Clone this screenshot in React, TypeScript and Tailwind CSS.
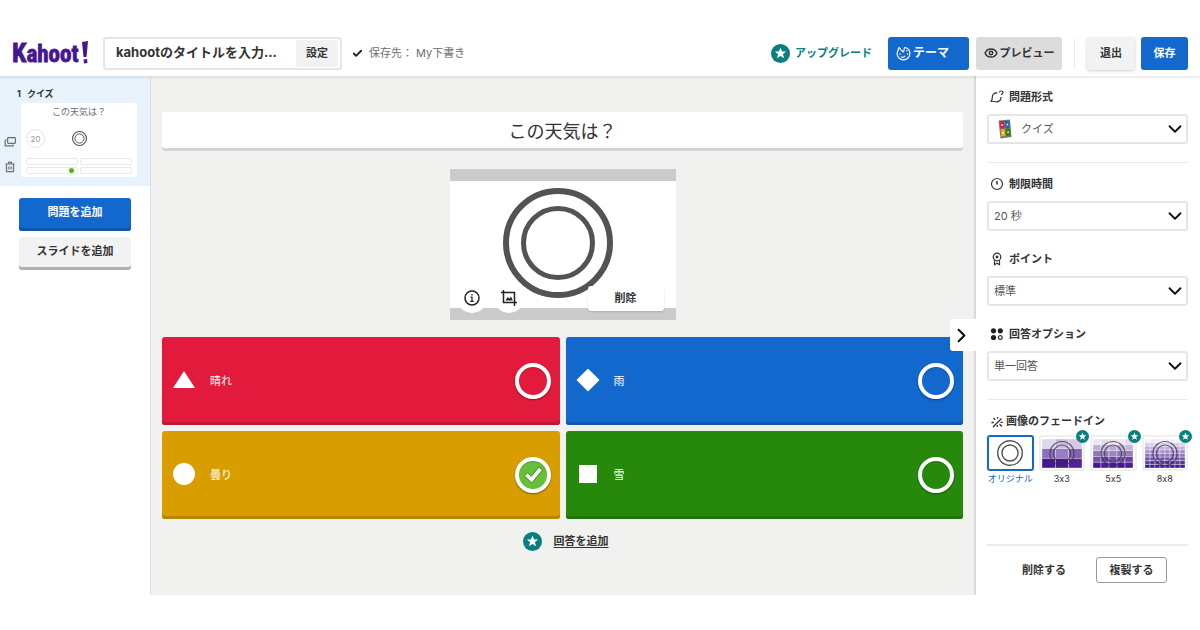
import { useState } from 'react'
import type { ReactNode } from 'react'
import { Check, ChevronDown, ChevronRight, Eye } from 'lucide-react'
import clsx from 'clsx'

type Shape = 'triangle' | 'diamond' | 'circle' | 'square'

const ANSWERS: { text: string; shape: Shape; color: string }[] = [
  { text: '晴れ', shape: 'triangle', color: 'bg-[#e21b3c] shadow-[inset_0_-3px_0_#c01733]' },
  { text: '雨', shape: 'diamond', color: 'bg-[#1368ce] shadow-[inset_0_-3px_0_#1058af]' },
  { text: '曇り', shape: 'circle', color: 'bg-[#d89e00] shadow-[inset_0_-3px_0_#b88600]' },
  { text: '雪', shape: 'square', color: 'bg-[#26890c] shadow-[inset_0_-3px_0_#20750a]' },
]

const FADES = [
  { label: 'オリジナル', cells: 0 },
  { label: '3x3', cells: 3 },
  { label: '5x5', cells: 5 },
  { label: '8x8', cells: 8 },
]

function Logo() {
  return (
    <a href="#" aria-label="Kahoot!" className="block shrink-0 text-[#46178f]">
      <svg
        width="78"
        height="30"
        viewBox="0 0 78 30"
        fill="currentColor"
        stroke="currentColor"
        strokeWidth="0.8"
        className="font-['Liberation_Sans_Narrow','Roboto_Condensed','Roboto',sans-serif] font-bold"
      >
        <text x="0" y="24" fontSize="23">
          <tspan fontSize="26">K</tspan>ahoot
        </text>
        <path d="M70 4l6-1-1.500 16h-3z M71.500 21.500l3.500-.5.5 4-3.500.5z" stroke="none" />
      </svg>
    </a>
  )
}

function StarBadge({ className }: { className?: string }) {
  return (
    <svg viewBox="0 0 20 20" className={className} aria-hidden="true">
      <circle cx="10" cy="10" r="10" fill="#0a7f7f" />
      <path d="M10 4l1.700 4h4.200l-3.400 2.700 1.300 4.300L10 12.500 6.200 15l1.300-4.300L4.100 8h4.200z" fill="#fff" />
    </svg>
  )
}

function Rings({ className, outer = 3, inner = 3 }: { className?: string; outer?: number; inner?: number }) {
  return (
    <svg viewBox="0 0 110 110" fill="none" stroke="#535353" className={className} aria-hidden="true">
      <circle cx="55" cy="55" r={55 - outer / 2} strokeWidth={outer} />
      <circle cx="55" cy="55" r={37 - inner / 2} strokeWidth={inner} />
    </svg>
  )
}

function ShapeIcon({ shape }: { shape: Shape }) {
  return (
    <svg viewBox="0 0 24 24" fill="#fff" className="size-6 shrink-0" aria-hidden="true">
      {shape === 'triangle' && <path d="M12 2l11 17H1z" />}
      {shape === 'diamond' && <path d="M12 -0.500l11.500 11.500L12 22.500.5 11z" />}
      {shape === 'circle' && <circle cx="12" cy="11" r="11" />}
      {shape === 'square' && <path d="M3 2h18v18H3z" />}
    </svg>
  )
}

function Header() {
  return (
    <header className="relative z-10 flex h-[46px] items-center bg-white pr-3 pl-3 shadow-[0_2px_2px_rgba(0,0,0,0.08)]">
      <Logo />
      <div className="ml-[13px] flex h-[33px] w-[239px] items-center rounded-[3px] border-2 border-[#e6e6e6] p-px">
        <input
          aria-label="kahootのタイトル"
          defaultValue="kahootのタイトルを入力..."
          className="min-w-0 flex-1 pl-2.5 text-[13px] font-bold text-[#333] outline-none"
        />
        <button className="mr-px h-[27px] w-[42px] rounded-[3px] bg-[#f2f2f2] font-bold">設定</button>
      </div>
      <div className="ml-2.5 flex items-center gap-1.5 text-[#6e6e6e]">
        <Check size={11} strokeWidth={4} className="text-[#222]" />
        保存先： My下書き
      </div>
      <a href="#" className="ml-auto flex items-center gap-[5px] font-bold text-[#0a7f7f]">
        <StarBadge className="size-[19px]" />
        アップグレード
      </a>
      <button className="ml-4 flex h-[33px] w-[81px] items-center gap-0.5 rounded-[3px] bg-[#1368ce] pl-2 font-bold text-white">
        <svg viewBox="0 0 16 16" fill="none" stroke="currentColor" strokeWidth="1.300" className="size-[15px]">
          <path d="M2.500 4.500C2.300 3 2.700 1.900 3.300 1.800c.9.100 1 1.700 2 2.200 1.300.5 1 2.200 2.300 2.200C9.200 6.200 8 1.900 9.500 1.600c3 .6 5.300 3.200 5.300 6.400 0 3.800-3 6.700-6.800 6.700S1.200 11.800 1.200 8c0-1.300.5-2.500 1.300-3.500z" />
          <path d="M5.500 11.300c1.200 1.200 3.300.9 4-.8" />
          <path d="M4.300 8.500h.1M11.500 5h.1M12.300 8.500h.1" strokeWidth="1.500" strokeLinecap="round" />
        </svg>
        <span className="text-xs">テーマ</span>
      </button>
      <button className="ml-[7px] flex h-[33px] w-[86px] items-center justify-center gap-0.5 rounded-[3px] bg-[#dcdcdc] font-bold">
        <Eye size={14} strokeWidth={2.500} />
        プレビュー
      </button>
      <span className="mx-3 h-[31px] w-px bg-[#ececec]" />
      <button className="h-[33px] w-12 rounded-[3px] bg-[#f2f2f2] font-bold shadow-[0_1px_3px_rgba(0,0,0,0.2)]">
        退出
      </button>
      <button className="ml-1.5 h-[33px] w-[47px] rounded-[3px] bg-[#1368ce] font-bold text-white">保存</button>
    </header>
  )
}

function Sidebar() {
  return (
    <aside className="w-[151px] shrink-0 border-r border-[#dedede] bg-white">
      <div className="bg-[#e8f2fb] pt-[9px] pr-[13px] pb-[9px]">
        <h2 className="flex h-[18px] items-center gap-1.5 pl-[17px] text-[9px] font-bold">
          <span>1</span>クイズ
        </h2>
        <div className="flex">
          <div className="flex w-[21px] flex-col items-center justify-end gap-[13px] pr-0.5 pb-1 text-[#6e6e6e]">
            <button aria-label="複製">
              <svg viewBox="0 0 12 12" fill="none" stroke="currentColor" strokeWidth="1.200" className="size-3">
                <rect x="3.600" y="1.600" width="7.800" height="5.800" rx="0.800" />
                <path d="M2.600 4H1.200v5.800h7.800V8.600" />
              </svg>
            </button>
            <button aria-label="削除">
              <svg viewBox="0 0 12 12" fill="none" stroke="currentColor" strokeWidth="1.200" className="size-3">
                <path d="M1.500 3h9M4.500 2.800V1.300h3v1.500M2.500 3.200v7.500h7V3.200M4.900 5.500v3M7.100 5.500v3" />
              </svg>
            </button>
          </div>
          <div className="flex-1 rounded-[3px] bg-white px-[5px] pb-[3px]">
            <p className="h-[18px] text-center text-[9px] leading-[18px] text-[#6e6e6e]">この天気は？</p>
            <div className="my-2 grid h-[19px] grid-cols-[19px_1fr_19px] items-center">
              <span className="flex size-[19px] items-center justify-center rounded-full border border-[#e3e3e3] text-[8px] text-[#999]">
                20
              </span>
              <Rings className="mx-auto size-[15px]" outer={8} inner={7} />
            </div>
            <div className="grid grid-cols-2 gap-0.5 pt-0.5">
              {ANSWERS.map((a) => (
                <span
                  key={a.text}
                  className="flex h-[7px] items-center justify-end rounded-[2px] border border-[#e9e9e9] pr-[3px]"
                >
                  {a.shape === 'circle' && <span className="size-[5px] rounded-full bg-[#4fb818]" />}
                </span>
              ))}
            </div>
          </div>
        </div>
      </div>
      <div className="flex flex-col gap-1.5 px-[19px] pt-3">
        <button className="h-[33px] rounded-[3px] bg-[#1368ce] pb-1 font-bold text-white shadow-[inset_0_-3px_0_#0f56ab]">
          問題を追加
        </button>
        <button className="h-[33px] rounded-[3px] bg-[#f2f2f2] pb-1 font-bold shadow-[inset_0_-3px_0_#b0b0b0]">
          スライドを追加
        </button>
      </div>
    </aside>
  )
}

function MediaPreview() {
  return (
    <div className="relative mx-auto mt-[18px] flex h-[151px] w-[226px] justify-center border-y-[12px] border-[#cbcbcb] bg-white pt-[7px]">
      <Rings className="mr-2.5 size-[110px]" outer={6} inner={5} />
      <div className="absolute inset-x-[7px] -bottom-[5px] flex items-center">
        <button aria-label="画像の情報" className="flex size-[30px] items-center justify-center rounded-full bg-white">
          <svg viewBox="0 0 16 16" fill="none" stroke="#222" strokeWidth="1.500" className="size-4">
            <circle cx="8" cy="8" r="7" />
            <path d="M6.500 7.200H8v4M6.200 11.400h3.600M7.200 4.800h1.600" strokeWidth="1.200" />
          </svg>
        </button>
        <button
          aria-label="画像を切り抜く"
          className="ml-[7px] flex size-[30px] items-center justify-center rounded-full bg-white"
        >
          <svg viewBox="0 0 18 18" fill="none" stroke="#222" strokeWidth="1.500" className="size-[18px]">
            <path d="M3.500 1v12.500h13.500M1 3.500h13.500V17" />
            <path d="M5.500 11.500l2.200-3.500 1.600 1.800L11 7.500l1.800 4z" fill="#222" stroke="none" />
          </svg>
        </button>
        <button className="mr-[5px] ml-auto h-[25px] w-[76px] rounded-[3px] bg-white font-bold shadow-[0_1px_2px_rgba(0,0,0,0.15)]">
          削除
        </button>
      </div>
    </div>
  )
}

function Editor() {
  const [correct, setCorrect] = useState('曇り')

  return (
    <main className="min-w-0 flex-1 bg-[#f1f1f0] px-[11px] pt-9 pb-11">
      <input
        aria-label="問題"
        defaultValue="この天気は？"
        className="block h-[39px] w-full rounded-[3px] bg-white pb-[3px] text-center text-lg text-[#333] shadow-[inset_0_-3px_0_#d5d5d5] outline-none"
      />
      <MediaPreview />
      <div className="mt-[17px] grid grid-cols-2 gap-1.5">
        {ANSWERS.map(({ text, shape, color }) => (
          <div key={text} className={clsx('flex h-[88px] items-center rounded-[3px] pr-[9px] pl-2.5', color)}>
            <ShapeIcon shape={shape} />
            <input
              aria-label={`回答 ${text}`}
              defaultValue={text}
              className="ml-3.5 min-w-0 flex-1 text-white outline-none"
            />
            <label className="relative size-9 shrink-0">
              <input
                type="checkbox"
                aria-label={`${text} を正解にする`}
                checked={correct === text}
                onChange={() => setCorrect(text)}
                className="size-9 appearance-none rounded-full border-4 border-white shadow-[0_1px_2px_rgba(0,0,0,0.4),inset_0_1px_1px_rgba(0,0,0,0.2)] checked:bg-[#66bf39]"
              />
              {correct === text && (
                <svg viewBox="0 0 36 36" className="pointer-events-none absolute inset-0">
                  <path
                    d="M9.500 18.800l3-3 3.700 3.600 7.700-9.200 3.600 2.800-10.800 13z"
                    fill="#fff"
                    stroke="#3f8a1d"
                    strokeWidth="1"
                    strokeLinejoin="round"
                  />
                </svg>
              )}
            </label>
          </div>
        ))}
      </div>
      <div className="mt-3 flex h-5 items-center justify-center gap-3 pl-1.5">
        <StarBadge className="size-[19px]" />
        <button className="font-bold underline underline-offset-2">回答を追加</button>
      </div>
    </main>
  )
}

interface FieldProps {
  id: string
  label: string
  value: string
  icon: ReactNode
  valueIcon?: ReactNode
}

function Field({ id, label, value, icon, valueIcon }: FieldProps) {
  return (
    <div>
      <label htmlFor={id} className="mb-[7px] flex h-5 items-center gap-[5px] pl-[3px] font-bold">
        <svg viewBox="0 0 14 14" fill="none" stroke="#333" strokeWidth="1.200" className="size-3.5">
          {icon}
        </svg>
        {label}
      </label>
      <div className="relative">
        {valueIcon}
        <select
          id={id}
          className={clsx(
            'block h-[30px] w-full appearance-none rounded-[3px] border-2 border-[#e6e6e6] bg-white text-[#555] outline-none',
            valueIcon ? 'pl-8' : 'pl-[5px]',
          )}
        >
          <option>{value}</option>
        </select>
        <ChevronDown
          size={22}
          strokeWidth={2}
          className="pointer-events-none absolute top-1 right-0.5 text-[#111]"
        />
      </div>
    </div>
  )
}

function QuizIcon() {
  return (
    <svg viewBox="0 0 14 20" className="pointer-events-none absolute top-[5px] left-[11px] h-5 w-3.5">
      <path d="M0.500 1.500L12 .5l1.500 17.500-11 1.500z" fill="#777" />
      <path d="M2 2.500l4-.4.600 7-4 .3z" fill="#e21b3c" />
      <path d="M7 2l4-.3.700 7-4.200.3z" fill="#1368ce" />
      <path d="M2.700 10.200l4-.3.600 7.200-4 .5z" fill="#ffa602" />
      <path d="M7.700 9.800l4.200-.3.700 7-4.300.5z" fill="#26890c" />
      <path d="M3.500 5.200h1.500v1.500H3.500zM8.600 4.700h1.500v1.500H8.600zM4.300 13h1.500v1.500H4.300zM9.400 12.500h1.500V14H9.400z" fill="#fff" />
    </svg>
  )
}

function FadeGrid({ cells }: { cells: number }) {
  const w = 40 / cells
  const h = 29 / cells
  return (
    <svg viewBox="0 0 40 29" className="h-[29px] w-10" aria-hidden="true">
      {Array.from({ length: cells * cells }).map((_, i) => {
        const row = Math.floor(i / cells)
        const col = i % cells
        const fade = (row + 0.45 + ((col * 2 + row) % 3) * 0.15) / (cells - 0.4)
        return (
          <rect
            key={i}
            x={col * w}
            y={row * h}
            width={w}
            height={h}
            fill="#46178f"
            fillOpacity={Math.min(1, fade)}
            stroke="#fff"
            strokeOpacity="0.6"
            strokeWidth="0.600"
          />
        )
      })}
      <g fill="none" stroke="#3b3150" strokeOpacity="0.75" strokeWidth="1.200">
        <circle cx="20" cy="14.500" r="12" />
        <circle cx="20" cy="14.500" r="8.500" />
      </g>
    </svg>
  )
}

function SettingsPanel() {
  const [fade, setFade] = useState('オリジナル')

  return (
    <aside className="relative flex w-[226px] shrink-0 flex-col border-l-2 border-[#d9d9d9] bg-white pt-[11px] pr-3 pb-3 pl-[11px]">
      <button
        aria-label="パネルを閉じる"
        className="absolute top-[243px] -left-[26px] flex h-8 w-[27px] items-center justify-center rounded-l-[3px] bg-white pr-1"
      >
        <ChevronRight size={23} strokeWidth={2.200} className="text-[#111]" />
      </button>

      <Field
        id="type"
        label="問題形式"
        value="クイズ"
        valueIcon={<QuizIcon />}
        icon={
          <>
            <path d="M7.500 3C4 2.700 2 4.800 2.300 7.800c.1 1-.4 2.100-1.100 3.500 1.200-.1 2.300-.1 3.300.2 3.800 1 6.800-1 6.600-4.500" />
            <path d="M9.500 2.500c0-2 3.500-2 3.500.1 0 1.400-1.700 1.200-1.700 2.400" />
          </>
        }
      />
      <hr className="mt-[18px] mb-[11px] border-[#e9e9e9]" />
      <div className="flex flex-col gap-[18px]">
        <Field
          id="time"
          label="制限時間"
          value="20 秒"
          icon={
            <>
              <circle cx="7" cy="7" r="5.500" />
              <path d="M7 4v3.500" strokeWidth="1.600" />
            </>
          }
        />
        <Field
          id="points"
          label="ポイント"
          value="標準"
          icon={
            <>
              <circle cx="7" cy="5" r="3.800" />
              <circle cx="7" cy="5" r="0.900" fill="#333" />
              <path d="M4.500 8.300v4.500L7 11.300l2.500 1.500V8.300" />
            </>
          }
        />
        <Field
          id="options"
          label="回答オプション"
          value="単一回答"
          icon={
            <>
              <g fill="#222" stroke="none">
                <circle cx="3.500" cy="3.800" r="2.600" />
                <circle cx="10.300" cy="3.800" r="2.600" />
                <circle cx="3.500" cy="10.500" r="2.600" />
              </g>
              <circle cx="10.300" cy="10.500" r="1.900" />
            </>
          }
        />
      </div>
      <hr className="mt-[18px] mb-[11px] border-[#e9e9e9]" />

      <h3 className="flex h-5 items-center gap-0.5 pl-[3px] font-bold">
        <svg viewBox="0 0 14 14" fill="none" stroke="#333" strokeWidth="1.300" className="size-3.5">
          <path d="M11.500 4.500L3 13M3.500 4l1.700 1.700M9.500 10l2.500 2.500M7.500 3v1.800M1.500 8.500h2.300M10.500 8.300h2.300M7.300 11v2" />
        </svg>
        画像のフェードイン
      </h3>
      <div className="mt-1 grid grid-cols-4 gap-[5px]">
        {FADES.map(({ label, cells }) => (
          <button
            key={label}
            onClick={() => setFade(label)}
            className={clsx(
              'relative text-[9px] whitespace-nowrap',
              fade === label ? 'text-[#1368ce]' : 'text-[#333]',
            )}
          >
            <span
              className={clsx(
                'flex h-9 items-center justify-center rounded-[3px] border-2',
                fade === label ? 'border-[#1368ce]' : 'border-[#f0f0f0]',
              )}
            >
              {cells === 0 ? <Rings className="size-[26px]" outer={6} inner={6} /> : <FadeGrid cells={cells} />}
            </span>
            <span className="flex h-4 items-center justify-center">{label}</span>
            {cells > 0 && <StarBadge className="absolute -top-[5px] -right-1 size-[13px]" />}
          </button>
        ))}
      </div>

      <div className="mt-auto flex items-center gap-[17px] border-t-2 border-[#ececec] pt-[11px] pr-[21px]">
        <button className="flex-1 pl-[22px] font-bold">削除する</button>
        <button className="h-[26px] w-[71px] rounded-[3px] border border-[#999] font-bold">複製する</button>
      </div>
    </aside>
  )
}

export default function App() {
  return (
    <div className="bg-white py-[30px] font-['Inter','Noto_Sans_CJK_JP',sans-serif] text-[11px] text-[#333] [font-feature-settings:'calt'_0]">
      <Header />
      <div className="flex">
        <Sidebar />
        <Editor />
        <SettingsPanel />
      </div>
    </div>
  )
}
